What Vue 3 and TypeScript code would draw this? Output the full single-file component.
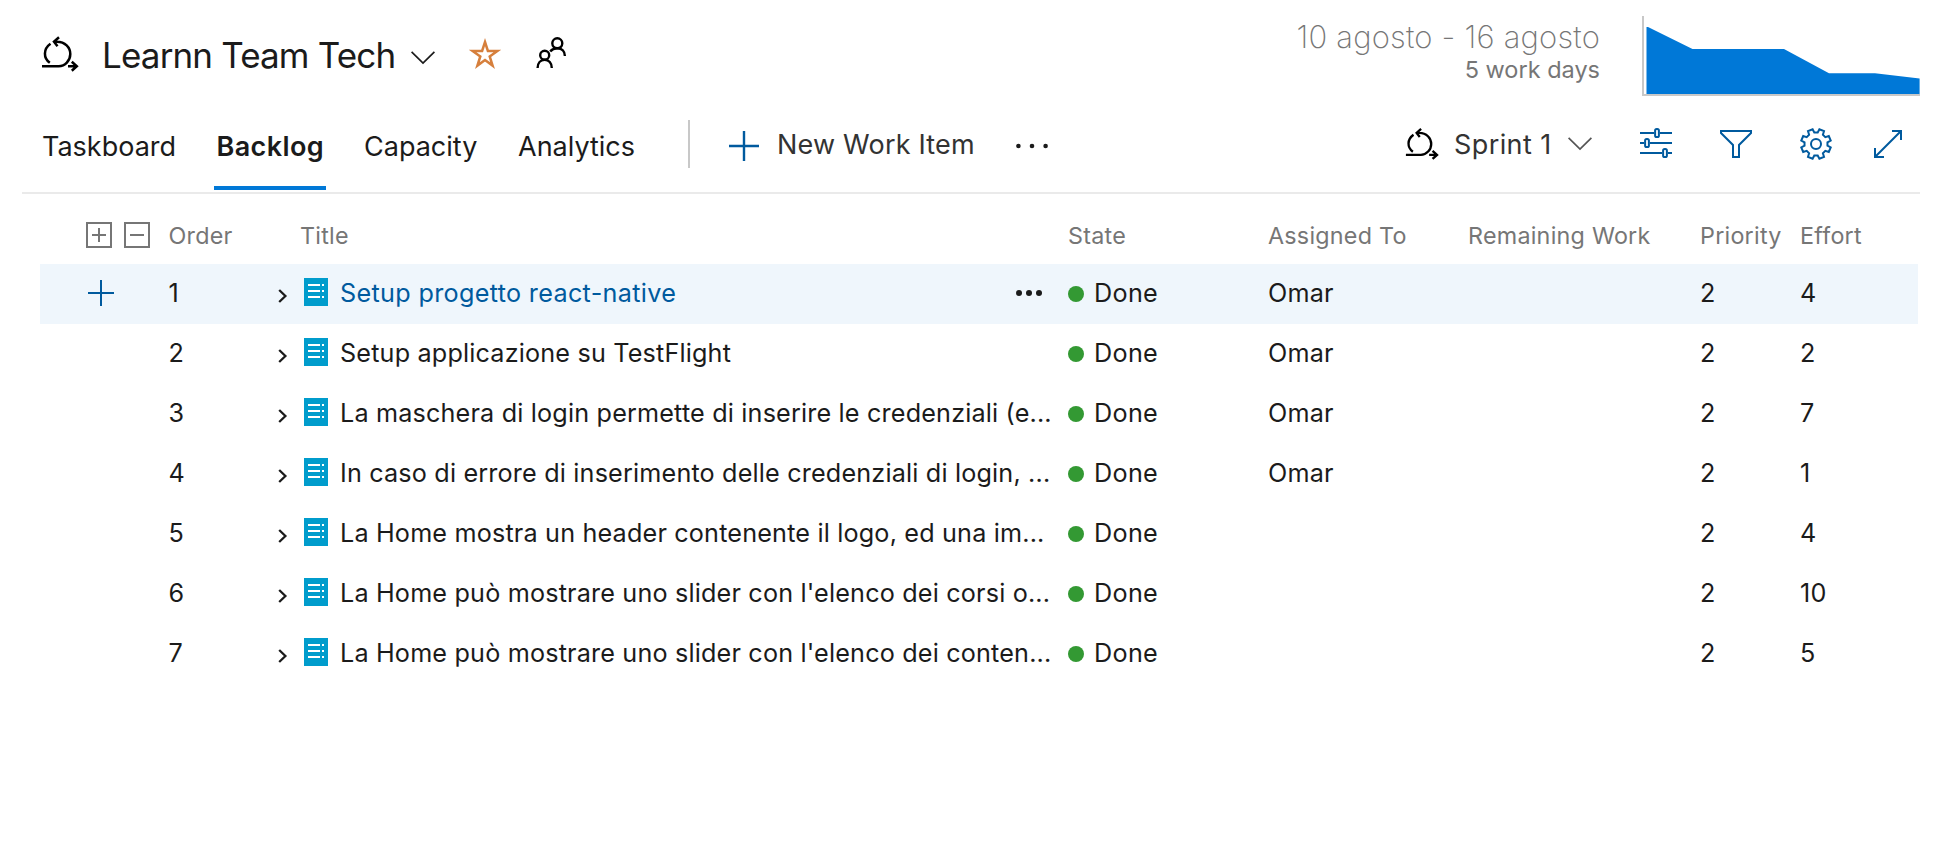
<script setup lang="ts">
interface WorkItem {
  order: number
  title: string
  assignedTo: string
  priority: number
  effort: number
  selected?: boolean
}

const tabs = ['Taskboard', 'Backlog', 'Capacity', 'Analytics']
const activeTab = 'Backlog'

const items: WorkItem[] = [
  { order: 1, title: 'Setup progetto react-native', assignedTo: 'Omar', priority: 2, effort: 4, selected: true },
  { order: 2, title: 'Setup applicazione su TestFlight', assignedTo: 'Omar', priority: 2, effort: 2 },
  { order: 3, title: 'La maschera di login permette di inserire le credenziali (e...', assignedTo: 'Omar', priority: 2, effort: 7 },
  { order: 4, title: 'In caso di errore di inserimento delle credenziali di login, ...', assignedTo: 'Omar', priority: 2, effort: 1 },
  { order: 5, title: 'La Home mostra un header contenente il logo, ed una im...', assignedTo: '', priority: 2, effort: 4 },
  { order: 6, title: "La Home può mostrare uno slider con l'elenco dei corsi o...", assignedTo: '', priority: 2, effort: 10 },
  { order: 7, title: "La Home può mostrare uno slider con l'elenco dei conten...", assignedTo: '', priority: 2, effort: 5 },
]

// Outline of an eight-toothed gear centred on (16, 16)
function gearPath(): string {
  const points: string[] = []
  const at = (deg: number, r: number) => {
    const a = (deg * Math.PI) / 180
    points.push(`${(16 + r * Math.cos(a)).toFixed(2)} ${(16 + r * Math.sin(a)).toFixed(2)}`)
  }
  for (let i = 0; i < 8; i++) {
    const c = 22.5 + i * 45
    at(c - 14, 11.6)
    at(c - 9.5, 15.1)
    at(c + 9.5, 15.1)
    at(c + 14, 11.6)
  }
  return `M${points.join('L')}Z`
}
const gear = gearPath()
</script>

<template>
  <main class="page">
    <header class="header">
      <div class="team">
        <svg class="sprint-icon" viewBox="0 0 40 38">
          <path d="M10.5 9.8C3.2 15 3.2 24 9.8 28.8M14 7.7h3C25 7.7 30.3 13.5 30.3 20S25 32.3 18.7 32.3H2M19 3.3l-5 4.4 3.5 4.5M28 32.3h9M31.8 27.8l5 4.5-5 4.5" />
        </svg>
        <h1>Learnn Team Tech</h1>
        <svg class="chevron" viewBox="0 0 24 13"><path d="M.6.8 12 12.1 23.4.8" /></svg>
        <svg class="star" viewBox="0 0 32 32">
          <path d="M16 4l2.9 8.9h9.5l-7.7 5.6 2.9 9.1-7.6-5.6-7.6 5.6 2.9-9.1-7.7-5.6h9.5z" />
        </svg>
        <svg class="people" viewBox="0 0 30 32">
          <circle cx="21.3" cy="6.3" r="5" />
          <circle cx="8.7" cy="18.3" r="4.5" />
          <path d="M1.6 31c0-5 3-8.2 7.1-8.2s7.1 3.2 7.1 8.2M14.2 14.5c1.7-2.1 4.2-3.2 7.1-3.2 4.5 0 7.6 3 7.6 7.8" />
        </svg>
      </div>
      <div class="summary">
        <div class="dates">
          <div class="range">10 agosto - 16 agosto</div>
          <div class="days">5 work days</div>
        </div>
        <svg class="burndown" viewBox="0 0 278 80">
          <path class="area" d="M4.5 11 6 11 50.5 33H142l45 24.3h46l44.6 5.2V78H4.5z" />
          <path class="axis" d="M1 0v79h277" />
        </svg>
      </div>
    </header>

    <section class="toolbar">
      <nav class="tabs">
        <a v-for="tab in tabs" :key="tab" class="tab" :class="{ active: tab === activeTab }">{{ tab }}</a>
      </nav>
      <div class="divider"></div>
      <svg class="new-plus" viewBox="0 0 30 30"><path d="M15 0v30M0 15h30" /></svg>
      <span class="new-label">New Work Item</span>
      <svg class="more" viewBox="0 0 32 6">
        <circle cx="2.4" cy="3" r="2.3" /><circle cx="16" cy="3" r="2.3" /><circle cx="29.6" cy="3" r="2.3" />
      </svg>
      <div class="tools">
        <svg class="sprint-icon small" viewBox="0 0 40 38">
          <path d="M10.5 9.8C3.2 15 3.2 24 9.8 28.8M14 7.7h3C25 7.7 30.3 13.5 30.3 20S25 32.3 18.7 32.3H2M19 3.3l-5 4.4 3.5 4.5M28 32.3h9M31.8 27.8l5 4.5-5 4.5" />
        </svg>
        <span class="sprint-label">Sprint 1</span>
        <svg class="chevron muted" viewBox="0 0 24 13"><path d="M.6.8 12 12.1 23.4.8" /></svg>
        <svg class="tool" viewBox="0 0 32 32">
          <path d="M0 5h14M20 5h12M0 15h4M10 15h22M0 25h22M28 25h4" />
          <rect x="15.1" y="1" width="3.8" height="8" rx="1.6" />
          <rect x="5.1" y="11" width="3.8" height="8" rx="1.6" />
          <rect x="23.1" y="21" width="3.8" height="8" rx="1.6" />
        </svg>
        <svg class="tool" viewBox="0 0 32 32"><path d="M1 3v2L13 17v12h6V17L31 5V3z" /></svg>
        <svg class="tool gear" viewBox="0 0 32 32">
          <path :d="gear" />
          <circle cx="16" cy="16" r="5" />
        </svg>
        <svg class="tool expand" viewBox="0 0 28 32"><path d="M18 3h9v9M27 3 1 29M1 20v9h9" /></svg>
      </div>
    </section>

    <section class="grid">
      <div class="row head">
        <div class="toggles">
          <svg viewBox="0 0 26 26"><path d="M1 1h24v24H1zM6 13h14M13 6v14" /></svg>
          <svg viewBox="0 0 26 26"><path d="M1 1h24v24H1zM6 13h14" /></svg>
        </div>
        <span>Order</span>
        <span class="title-head">Title</span>
        <span>State</span>
        <span>Assigned To</span>
        <span>Remaining Work</span>
        <span>Priority</span>
        <span>Effort</span>
      </div>
      <div v-for="item in items" :key="item.order" class="row" :class="{ selected: item.selected }">
        <div class="add">
          <svg v-if="item.selected" viewBox="0 0 26 26"><path d="M13 0v26M0 13h26" /></svg>
        </div>
        <span>{{ item.order }}</span>
        <div class="title-cell">
          <svg class="caret" viewBox="0 0 9 14"><path d="M1.2 1 7.4 7l-6.2 6" /></svg>
          <svg class="pbi" viewBox="0 0 24 28">
            <rect width="24" height="28" />
            <path d="M4 7h12M18 7h2M4 13h12M18 13h2M4 19h12M18 19h2" />
          </svg>
          <span class="title">{{ item.title }}</span>
          <svg v-if="item.selected" class="row-more" viewBox="0 0 26 6">
            <circle cx="3" cy="3" r="3" /><circle cx="13" cy="3" r="3" /><circle cx="23" cy="3" r="3" />
          </svg>
        </div>
        <div class="state"><i></i><span>Done</span></div>
        <span>{{ item.assignedTo }}</span>
        <span></span>
        <span>{{ item.priority }}</span>
        <span>{{ item.effort }}</span>
      </div>
    </section>
  </main>
</template>

<style>
body {
  margin: 0;
  background: #fff;
}
</style>

<style scoped>
.page {
  box-sizing: border-box;
  width: 1950px;
  height: 842px;
  overflow: hidden;
  background: #fff;
  color: #1b1b1b;
  font-family: Inter, Roboto, "Liberation Sans", sans-serif;
}
svg {
  display: block;
  flex: none;
  fill: none;
  overflow: visible;
}
.header {
  display: flex;
  justify-content: space-between;
  height: 100px;
  padding: 0 30px 0 40px;
}
.team {
  display: flex;
  align-items: center;
  height: 110px;
}
.sprint-icon {
  width: 40px;
  height: 38px;
  margin-top: -4px;
  stroke: #000;
  stroke-width: 2.5;
}
h1 {
  width: 309px;
  margin: 0 0 0 22px;
  font-size: 35px;
  font-weight: 400;
  line-height: 44px;
  letter-spacing: -0.85px;
  white-space: nowrap;
}
.chevron {
  width: 24px;
  height: 13px;
  margin-top: 5px;
  stroke: #1b1b1b;
  stroke-width: 1.7;
}
.chevron.muted {
  margin: -2px 0 0 17px;
  stroke: #555;
}
.star {
  width: 32px;
  height: 32px;
  margin: -2px 0 0 34px;
  stroke: #d67f3c;
  stroke-width: 2.5;
}
.people {
  width: 30px;
  height: 32px;
  margin: -5px 0 0 35px;
  stroke: #000;
  stroke-width: 2.4;
}
.summary {
  display: flex;
  gap: 42px;
}
.dates {
  padding-top: 17px;
  color: #767676;
  text-align: right;
}
.range {
  font-size: 31px;
  font-weight: 200;
  line-height: 40px;
  letter-spacing: 0.2px;
}
.days {
  font-size: 23.5px;
  line-height: 26px;
}
.burndown {
  width: 278px;
  height: 80px;
  margin-top: 16px;
}
.area {
  fill: #0078d7;
}
.axis {
  stroke: #c8c8c8;
  stroke-width: 2;
}
.toolbar {
  display: flex;
  align-items: center;
  height: 92px;
  margin: 0 30px 0 22px;
  padding-left: 20px;
  border-bottom: 2px solid #eaeaea;
  font-size: 27px;
  white-space: nowrap;
}
.tabs {
  display: grid;
  grid-template-columns: 174.5px 147.5px 154px 170px;
}
.tab {
  position: relative;
  height: 92px;
  line-height: 94px;
}
.tab.active {
  font-weight: 600;
  letter-spacing: 0.4px;
}
.tab.active::after {
  content: "";
  position: absolute;
  left: -2.5px;
  bottom: 2px;
  width: 112px;
  height: 4px;
  background: #0078d7;
}
.divider {
  width: 2px;
  height: 48px;
  margin-top: -4px;
  background: #c8c8c8;
}
.new-plus {
  width: 30px;
  height: 30px;
  margin-left: 39px;
  stroke: #005a9e;
  stroke-width: 2.4;
}
.new-label {
  width: 239px;
  margin: -4px 0 0 18px;
  color: #333;
  letter-spacing: 0.2px;
}
.more {
  width: 32px;
  height: 6px;
}
.more circle,
.row-more circle {
  fill: #1b1b1b;
}
.tools {
  display: flex;
  align-items: center;
  margin: -4px 18px 0 auto;
}
.sprint-icon.small {
  width: 36px;
  height: 34px;
  margin-top: -2px;
  stroke-width: 2.6;
}
.sprint-label {
  width: 97px;
  margin-left: 14px;
  color: #333;
  letter-spacing: 0.4px;
}
.tool {
  width: 32px;
  height: 32px;
  margin-left: 48px;
  stroke: #005a9e;
  stroke-width: 2;
}
.tool.expand {
  width: 28px;
  margin-left: 42px;
}
.grid {
  padding: 12px 32px 0 40px;
}
.row {
  display: grid;
  grid-template-columns: 128.5px 108.5px 791px 200px 200px 232px 100px 118px;
  align-items: center;
  box-sizing: border-box;
  height: 60px;
  padding-bottom: 2px;
  font-size: 25.2px;
  letter-spacing: 0.17px;
  white-space: nowrap;
}
.row.head {
  height: 58px;
  padding: 1px 0 0;
  color: #767676;
  font-size: 23.3px;
  letter-spacing: 0.25px;
}
.row.selected {
  background: #eff6fc;
}
.toggles {
  display: flex;
  gap: 12px;
  margin-top: -1px;
  padding-left: 46px;
}
.toggles svg {
  width: 26px;
  height: 26px;
  stroke: #767676;
  stroke-width: 2;
}
.title-head {
  padding-left: 23px;
}
.add {
  padding-left: 48px;
}
.add svg {
  width: 26px;
  height: 26px;
  stroke: #005a9e;
  stroke-width: 2;
}
.title-cell {
  display: flex;
  align-items: center;
}
.caret {
  width: 9px;
  height: 14px;
  margin: 6px 0 0 1px;
  stroke: #1b1b1b;
  stroke-width: 2.3;
}
.pbi {
  width: 24px;
  height: 28px;
  margin: -2px 0 0 17px;
}
.pbi rect {
  fill: #009ccc;
}
.pbi path {
  stroke: #fff;
  stroke-width: 2;
}
.title {
  margin-left: 12px;
}
.selected .title {
  color: #005a9e;
  letter-spacing: 0.32px;
}
.row-more {
  width: 26px;
  height: 6px;
  margin: 0 26px 0 auto;
}
.state {
  display: flex;
  align-items: center;
}
.state i {
  width: 16px;
  height: 16px;
  margin-top: 2px;
  border-radius: 50%;
  background: #339933;
}
.state span {
  margin-left: 10px;
  letter-spacing: 0.3px;
}
</style>
